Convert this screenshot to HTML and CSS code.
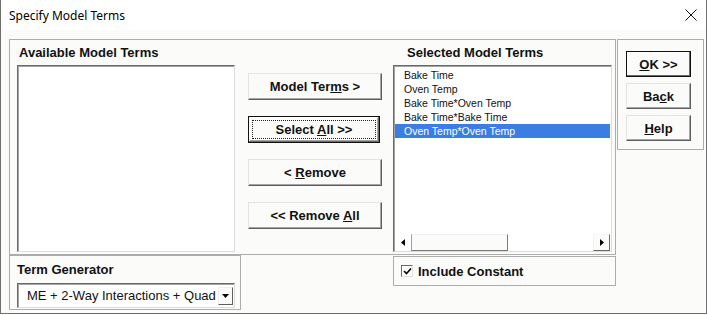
FILE: index.html
```html
<!DOCTYPE html>
<html lang="en">

<head>
    <meta charset="UTF-8">
    <meta name="viewport" content="width=device-width, initial-scale=1.0">
    <title>Specify Model Terms</title>
    <link rel="stylesheet" href="styles.css">
</head>

<body>
    <div class="window">
        <div class="titlebar">
            <span class="title">Specify Model Terms</span>
            <svg class="close" width="12" height="12" viewBox="0 0 12 12">
                <path d="M0.5 0.5 L11.5 11.5 M11.5 0.5 L0.5 11.5" stroke="#111" stroke-width="1" fill="none" />
            </svg>
        </div>
        <div class="dialog">
            <div class="left">
                <div class="frame main-frame">
                    <div class="col col-avail">
                        <div class="caption">Available Model Terms</div>
                        <div class="listbox"></div>
                    </div>
                    <div class="col col-buttons">
                        <div class="btn"><span>Model Ter<u>m</u>s &gt;</span></div>
                        <div class="btn btn-focus"><span>Select <u>A</u>ll &gt;&gt;</span></div>
                        <div class="btn"><span>&lt; <u>R</u>emove</span></div>
                        <div class="btn"><span>&lt;&lt; Remove <u>A</u>ll</span></div>
                    </div>
                    <div class="col col-selected">
                        <div class="caption caption-sel">Selected Model Terms</div>
                        <div class="listbox">
                            <div class="items">
                                <div class="item">Bake Time</div>
                                <div class="item">Oven Temp</div>
                                <div class="item">Bake Time*Oven Temp</div>
                                <div class="item">Bake Time*Bake Time</div>
                                <div class="item selected">Oven Temp*Oven Temp</div>
                            </div>
                            <div class="hscroll">
                                <div class="sb-arrow sb-left">
                                    <svg width="4" height="7" viewBox="0 0 4 7"><path d="M4 0 L0 3.5 L4 7 Z" fill="#000" /></svg>
                                </div>
                                <div class="sb-thumb"></div>
                                <div class="sb-track"></div>
                                <div class="sb-arrow sb-right">
                                    <svg width="4" height="7" viewBox="0 0 4 7"><path d="M0 0 L4 3.5 L0 7 Z" fill="#000" /></svg>
                                </div>
                            </div>
                        </div>
                    </div>
                </div>
                <div class="bottom-row">
                    <div class="frame term-frame">
                        <div class="caption">Term Generator</div>
                        <div class="combo">
                            <span class="combo-text">ME + 2-Way Interactions + Quad</span>
                            <div class="combo-btn">
                                <svg width="7" height="4" viewBox="0 0 7 4"><path d="M0 0 L7 0 L3.5 4 Z" fill="#000" /></svg>
                            </div>
                        </div>
                    </div>
                    <div class="frame const-frame">
                        <div class="checkbox">
                            <svg width="9" height="9" viewBox="0 0 9 9"><path d="M1 4 L3.5 6.5 L8 1.5" stroke="#000" stroke-width="1.6" fill="none" /></svg>
                        </div>
                        <span class="check-label">Include Constant</span>
                    </div>
                </div>
            </div>
            <div class="frame side-frame">
                <div class="btn btn-side btn-default"><span><u>O</u>K &gt;&gt;</span></div>
                <div class="btn btn-side"><span>Ba<u>c</u>k</span></div>
                <div class="btn btn-side"><span><u>H</u>elp</span></div>
            </div>
        </div>
    </div>
</body>

</html>
```

FILE: styles.css
```css
* {
    margin: 0;
    padding: 0;
    box-sizing: border-box;
}

body {
    background-color: #fff;
    font-family: "Liberation Sans", Arial, sans-serif;
    color: #111;
}

.window {
    width: 707px;
    height: 314px;
    background-color: #fbfbfa;
    border-left: 1px solid #6f6f6f;
    border-right: 1px solid #6f6f6f;
    border-bottom: 1px solid #6f6f6f;
}

.titlebar {
    height: 30px;
    display: flex;
    align-items: center;
    justify-content: space-between;
    padding: 0 9px 0 8px;
    background-color: #fff;
}

.titlebar .title {
    font-family: "Noto Sans", sans-serif;
    font-size: 12px;
    color: #000;
}

.dialog {
    display: flex;
    align-items: flex-start;
    padding: 9px 0 0 8px;
}

.frame {
    border: 1px solid #acacac;
}

.left {
    width: 607px;
}

.main-frame {
    height: 216px;
    display: flex;
}

.caption {
    font-size: 13px;
    font-weight: bold;
    line-height: 15px;
    height: 25px;
    padding: 5px 0 0 2px;
}

.col-avail {
    margin-left: 7px;
    width: 218px;
}

.col-buttons {
    margin-left: 13px;
    width: 134px;
    padding-top: 33px;
}

.col-selected {
    margin-left: 11px;
    width: 219px;
}

.caption-sel {
    padding-left: 14px;
}

.listbox {
    height: 187px;
    background-color: #fff;
    border-top: 1px solid #6a6a6a;
    border-left: 1px solid #6a6a6a;
    border-right: 1px solid #dcdcdc;
    border-bottom: 1px solid #dcdcdc;
    box-shadow: inset 1px 1px 0 #a3a3a3;
    display: flex;
    flex-direction: column;
    padding: 1px 0 0 1px;
}

.items {
    flex: 1;
    padding-top: 1px;
}

.item {
    height: 14px;
    line-height: 14px;
    font-size: 10.5px;
    padding-left: 9px;
    margin-right: 1px;
}

.item.selected {
    background-color: #3b7de0;
    color: #fff;
}

.hscroll {
    height: 17px;
    display: flex;
    margin-right: 1px;
}

.sb-arrow {
    width: 16px;
    display: flex;
    align-items: center;
    justify-content: center;
}

.sb-right {
    width: 17px;
    border-top: 1px solid #f4f4f4;
    border-left: 1px solid #f4f4f4;
    border-right: 1px solid #6a6a6a;
    border-bottom: 1px solid #6a6a6a;
    background-color: #fbfbfa;
}

.sb-thumb {
    width: 97px;
    background-color: #fbfbfa;
    border-top: 1px solid #f0f0f0;
    border-left: 1px solid #a0a0a0;
    border-right: 1px solid #7a7a7a;
    border-bottom: 1px solid #7a7a7a;
}

.sb-track {
    flex: 1;
    background-color: #fff;
}

.btn {
    position: relative;
    height: 27px;
    margin-bottom: 16px;
    background-color: #fbfbfa;
    border-top: 1px solid #e4e4e4;
    border-left: 1px solid #e4e4e4;
    border-right: 1px solid #5e5e5e;
    border-bottom: 1px solid #5e5e5e;
    box-shadow: inset -1px -1px 0 #a5a5a5;
    font-size: 13px;
    font-weight: bold;
    display: flex;
    align-items: center;
    justify-content: center;
    color: #111;
}

.btn u {
    text-underline-offset: 1px;
}

.btn-focus {
    width: 132px;
    border: 1px solid #111;
    box-shadow: inset -1px -1px 0 #6a6a6a, inset 1px 1px 0 #fff, inset -2px -2px 0 #a5a5a5;
}

.btn-focus::after {
    content: "";
    position: absolute;
    left: 3px;
    top: 3px;
    right: 3px;
    bottom: 3px;
    border: 1px dotted #222;
}

.side-frame {
    margin-left: 1px;
    width: 87px;
    height: 111px;
    padding: 11px 0 0 8px;
}

.btn-side {
    width: 65px;
    height: 26px;
    margin-bottom: 6px;
}

.btn-default {
    border: 1px solid #111;
    box-shadow: inset -1px -1px 0 #6a6a6a, inset 1px 1px 0 #fff;
}

.bottom-row {
    display: flex;
    align-items: flex-start;
}

.term-frame {
    width: 232px;
    height: 55px;
    padding-left: 7px;
}

.term-frame .caption {
    height: 27px;
    padding: 6px 0 0 0;
}

.combo {
    width: 218px;
    height: 25px;
    background-color: #fff;
    border-top: 1px solid #6a6a6a;
    border-left: 1px solid #6a6a6a;
    border-right: 1px solid #dcdcdc;
    border-bottom: 1px solid #dcdcdc;
    box-shadow: inset 1px 1px 0 #a3a3a3;
    display: flex;
    align-items: center;
    justify-content: space-between;
    padding: 0 1px 0 9px;
}

.combo-text {
    font-size: 13px;
    color: #111;
    white-space: nowrap;
}

.combo-btn {
    width: 15px;
    height: 18px;
    background-color: #fbfbfa;
    border-top: 1px solid #f0f0f0;
    border-left: 1px solid #f0f0f0;
    border-right: 1px solid #5e5e5e;
    border-bottom: 1px solid #5e5e5e;
    display: flex;
    align-items: center;
    justify-content: center;
}

.const-frame {
    margin-left: 152px;
    margin-top: 1px;
    width: 223px;
    height: 30px;
    display: flex;
    align-items: center;
    padding-left: 7px;
}

.checkbox {
    width: 12px;
    height: 12px;
    background-color: #fff;
    border-top: 1px solid #6a6a6a;
    border-left: 1px solid #6a6a6a;
    border-right: 1px solid #e0e0e0;
    border-bottom: 1px solid #e0e0e0;
    display: flex;
    align-items: center;
    justify-content: center;
}

.check-label {
    margin-left: 5px;
    font-size: 13px;
    font-weight: bold;
}
```
